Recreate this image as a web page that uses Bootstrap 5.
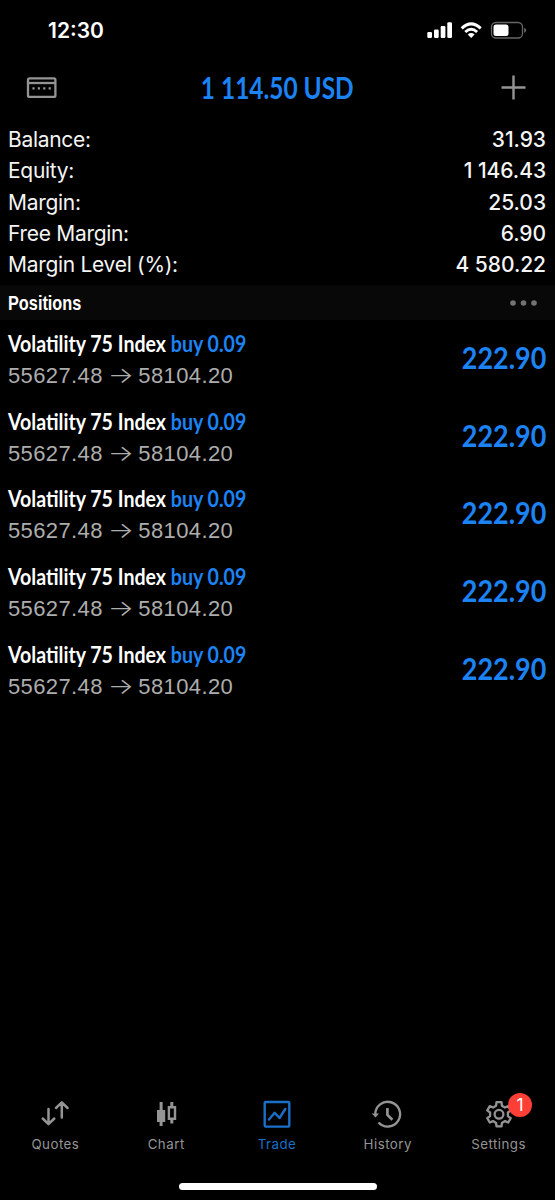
<!DOCTYPE html>
<html lang="en" data-bs-theme="dark">
<head>
<meta charset="utf-8">
<meta name="viewport" content="width=device-width, initial-scale=1">
<title>Trade</title>
<link href="https://cdn.jsdelivr.net/npm/bootstrap@5.3.0/dist/css/bootstrap.min.css" rel="stylesheet">
<style>
:root{--accent:#1c83f5;--dim:#949494}
body{background:#000;color:#f4f4f4;font-family:Inter,"Liberation Sans",sans-serif;height:1200px;overflow:hidden}
svg{display:block;flex:none}
.status-bar{height:60px;padding:0 28px 0 48px}
.clock{font-size:21px;font-weight:600;line-height:1;color:#fff}
.top-bar{height:56px;padding:0 29.5px 1px 26px}
.condensed{font-family:Lato,"Open Sans",sans-serif;font-weight:700;white-space:nowrap;display:inline-block;line-height:1}
.total{font-size:29.5px;color:var(--accent);transform:scaleX(.828);margin-right:2px}
.accent{color:var(--accent)}
.summary{padding:8px 9px 0 8px;height:169px}
.summary-row{height:31.25px;font-size:21px;line-height:31.25px;letter-spacing:-.3px}
.summary-row dd{font-weight:500;letter-spacing:-.05px}
.section-bar{height:35px;background:#080808;padding:0 18px 0 8px}
.section-title{font:700 20.5px/1 "Liberation Sans",sans-serif;transform:scaleX(.795);transform-origin:left;color:#fff;padding-top:1px}
.position-item{height:77.7px;padding:11px 9px 0 8px}
.symbol{font-size:23.5px;line-height:25px;transform:scaleX(.833);transform-origin:left;color:#fff}
.prices{font:400 22px/26px "Liberation Sans",sans-serif;letter-spacing:.38px;color:#adadad;margin-top:6px;white-space:nowrap}
.arrow{font-family:Inter,sans-serif;font-weight:300;display:inline-block;width:35.5px;text-align:center;letter-spacing:0;transform:scaleX(1.25)}
.profit{font-size:31px;transform:scaleX(.868);transform-origin:right;padding-top:11px}
.tab-bar{height:73px;padding-right:1px}
.tab-item{width:20%;color:var(--dim);font-size:13.3px;letter-spacing:.5px;line-height:16px;text-decoration:none}
.tab-item.active{color:#1a6fc9}
.tab-icon{height:32px;margin-bottom:6px;position:relative}
.count{position:absolute;left:25.500px;top:-5px;width:24px;height:24px;background:#fe3f36;color:#fff;font-size:17.5px;line-height:24px;letter-spacing:0}
.home-area{height:29px;padding-top:11.5px}
.home-bar{width:198px;height:7px;background:#fff}
</style>
</head>
<body class="d-flex flex-column">
<header>
  <div class="status-bar d-flex align-items-center justify-content-between">
    <span class="clock">12:30</span>
    <svg width="100" height="20" viewBox="427 20 100 20" fill="#fff">
      <rect x="427.3" y="32" width="4.7" height="6" rx="1.2"/><rect x="434" y="29.5" width="4.7" height="8.500" rx="1.200"/><rect x="440.700" y="26" width="4.700" height="12" rx="1.200"/><rect x="447.300" y="22.200" width="4.700" height="15.800" rx="1.200"/>
      <g fill="none" stroke="#fff" stroke-width="3"><path d="M461.700 28.300Q471.200 19.300 480.700 28.300M465.300 32Q471.200 26.600 477.100 32"/></g>
      <path d="M467.800 34.500Q471.200 31.700 474.600 34.500L471.200 38Z"/>
      <rect x="491.500" y="22.500" width="31" height="15.500" rx="4.500" fill="none" stroke="#666" stroke-width="1.300"/>
      <rect x="493.500" y="24.500" width="15" height="11.500" rx="2.500"/>
      <path d="M524.200 27.800Q526.200 28.500 526.200 30.300T524.200 32.800Z" fill="#666"/>
    </svg>
  </div>
  <div class="top-bar d-flex align-items-center justify-content-between">
    <svg width="31" height="22" viewBox="0 0 31 22" fill="none" stroke="#949494" stroke-width="2.300"><rect x="2" y="1.300" width="27.400" height="18.600" rx="1.500"/><path d="M2 6H29"/><path d="M6.400 11.300h2.200m3.200 0h2.200m3.200 0h2.200m3.200 0h2.200"/></svg>
    <span class="condensed total">1 114.50 USD</span>
    <svg width="25" height="25" viewBox="0 0 25 25" stroke="#949494" stroke-width="2.400"><path d="M12.500 .5v24M.5 12.500h24"/></svg>
  </div>
</header>
<main class="flex-grow-1">
  <dl class="summary m-0">
    <div class="summary-row d-flex justify-content-between"><dt class="fw-normal">Balance:</dt><dd class="m-0">31.93</dd></div>
    <div class="summary-row d-flex justify-content-between"><dt class="fw-normal">Equity:</dt><dd class="m-0">1 146.43</dd></div>
    <div class="summary-row d-flex justify-content-between"><dt class="fw-normal">Margin:</dt><dd class="m-0">25.03</dd></div>
    <div class="summary-row d-flex justify-content-between"><dt class="fw-normal">Free Margin:</dt><dd class="m-0">6.90</dd></div>
    <div class="summary-row d-flex justify-content-between"><dt class="fw-normal">Margin Level (%):</dt><dd class="m-0">4 580.22</dd></div>
  </dl>
  <div class="section-bar d-flex align-items-center justify-content-between">
    <span class="section-title">Positions</span>
    <svg width="27" height="6" viewBox="0 0 27 6" fill="#737373"><circle cx="3" cy="3" r="2.800"/><circle cx="13.500" cy="3" r="2.800"/><circle cx="24" cy="3" r="2.800"/></svg>
  </div>
  <div id="positions"></div>
</main>
<nav class="tab-bar d-flex text-center">
  <a class="tab-item d-flex flex-column align-items-center"><span class="tab-icon d-flex align-items-center"><svg width="32" height="32" viewBox="0 0 32 32" fill="none" stroke="currentColor" stroke-width="2.500" stroke-linecap="round" stroke-linejoin="round"><path d="M9.500 11v14.500M3.700 20.500l5.800 5.600 5.800-5.600M22.800 19.500V5M17 10l5.800-5.600L28.600 10"/></svg></span>Quotes</a>
  <a class="tab-item d-flex flex-column align-items-center"><span class="tab-icon d-flex align-items-center"><svg width="32" height="32" viewBox="0 0 32 32" fill="currentColor"><path d="M9.600 4h3v8h2.600v12h-2.600v4h-3v-4H7V12h2.600z"/><path d="M20.300 4h3v4h2.900v14h-2.900v3.500h-3V22h-2.600V8h2.600zM20.100 10.400v9.200h3.700v-9.200z" fill-rule="evenodd"/></svg></span>Chart</a>
  <a class="tab-item active d-flex flex-column align-items-center"><span class="tab-icon d-flex align-items-center"><svg width="32" height="32" viewBox="0 0 32 32" fill="none" stroke="currentColor" stroke-width="2.400" stroke-linejoin="round"><rect x="3.700" y="4" width="24.600" height="24.600" rx="1"/><path stroke-linecap="round" d="M8 21.500l5.700-6.700 4.800 5.200L24.300 11"/></svg></span>Trade</a>
  <a class="tab-item d-flex flex-column align-items-center"><span class="tab-icon d-flex align-items-center"><svg width="32" height="32" viewBox="0 0 32 32" fill="none" stroke="currentColor" stroke-width="2.400"><path d="M3.300 16.300A12.400 12.400 0 1 1 6.500 24.500"/><path stroke-width="2.700" d="M15.400 10v7l5 4.700"/><path d="M-.3 15.500h7.400L3.500 19.500z" fill="currentColor" stroke="none"/></svg></span>History</a>
  <a class="tab-item d-flex flex-column align-items-center"><span class="tab-icon d-flex align-items-center"><svg width="32" height="32" viewBox="-16 -16.300 32 32" fill="none" stroke="currentColor" stroke-width="2.300" stroke-linejoin="round"><path d="M-2.900-8.600L-2.500-12.100H2.500L2.900-8.600 6-6.810 9.230-8.220 11.730-3.880 8.900-1.790V1.790L11.730 3.880 9.230 8.220 6 6.810 2.900 8.600 2.500 12.100H-2.500L-2.900 8.600-6 6.810-9.230 8.220-11.730 3.880-8.900 1.790V-1.790L-11.730-3.880-9.230-8.220-6-6.810Z"/><circle r="4.400"/></svg><span class="count rounded-circle">1</span></span>Settings</a>
</nav>
<footer class="home-area d-flex justify-content-center"><div class="home-bar rounded-pill"></div></footer>
<script src="https://cdn.jsdelivr.net/npm/bootstrap@5.3.0/dist/js/bootstrap.bundle.min.js"></script>
<script>
const positions = Array.from({length: 5}, () => ({symbol: "Volatility 75 Index", side: "buy 0.09", open: "55627.48", now: "58104.20", profit: "222.90"}));
document.getElementById("positions").innerHTML = positions.map(p => `
<div class="position-item d-flex justify-content-between">
  <div><div class="condensed symbol d-block">${p.symbol} <span class="accent">${p.side}</span></div>
  <div class="prices">${p.open}<span class="arrow">→</span>${p.now}</div></div>
  <div class="condensed profit accent">${p.profit}</div>
</div>`).join("");
</script>
</body></html>
